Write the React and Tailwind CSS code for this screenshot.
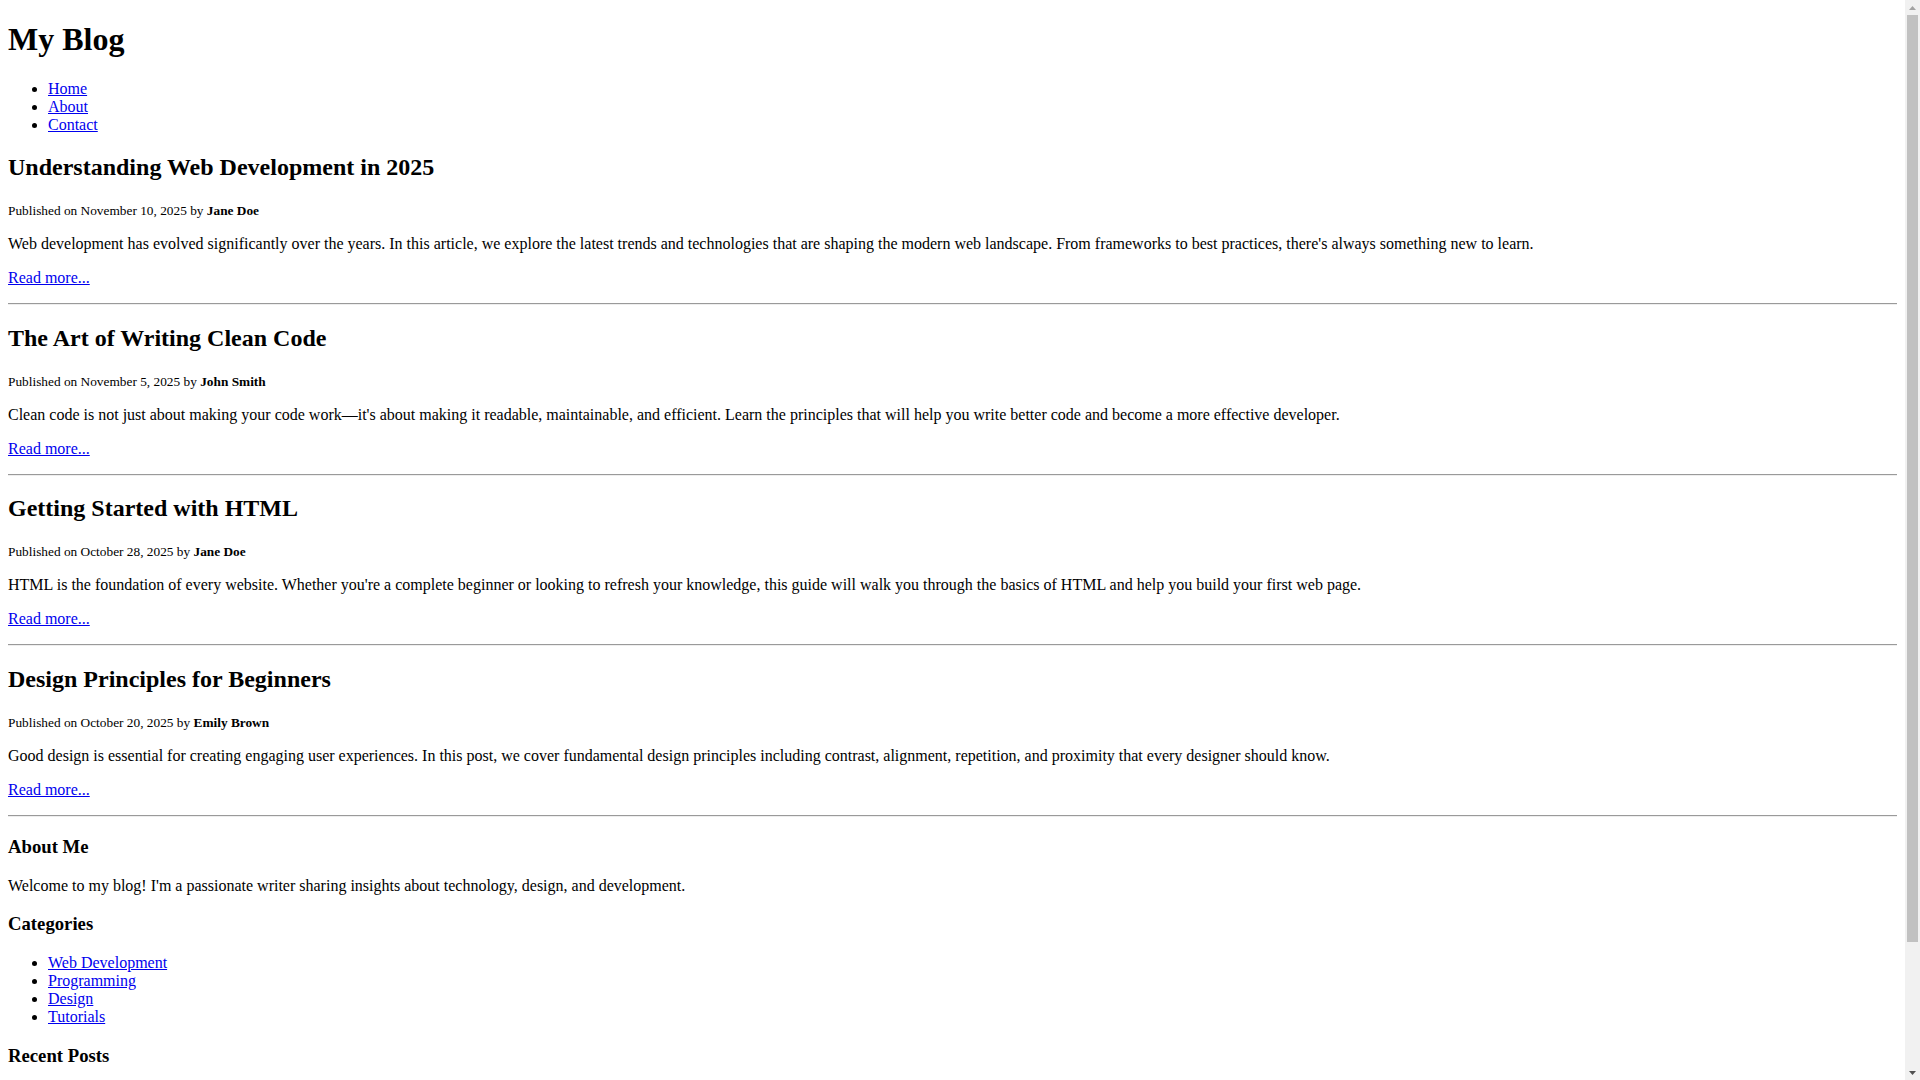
import React from "react";

const posts = [
  {
    title: "Understanding Web Development in 2025",
    date: "November 10, 2025",
    author: "Jane Doe",
    text: "Web development has evolved significantly over the years. In this article, we explore the latest trends and technologies that are shaping the modern web landscape. From frameworks to best practices, there's always something new to learn.",
  },
  {
    title: "The Art of Writing Clean Code",
    date: "November 5, 2025",
    author: "John Smith",
    text: "Clean code is not just about making your code work\u2014it's about making it readable, maintainable, and efficient. Learn the principles that will help you write better code and become a more effective developer.",
  },
  {
    title: "Getting Started with HTML",
    date: "October 28, 2025",
    author: "Jane Doe",
    text: "HTML is the foundation of every website. Whether you're a complete beginner or looking to refresh your knowledge, this guide will walk you through the basics of HTML and help you build your first web page.",
  },
  {
    title: "Design Principles for Beginners",
    date: "October 20, 2025",
    author: "Emily Brown",
    text: "Good design is essential for creating engaging user experiences. In this post, we cover fundamental design principles including contrast, alignment, repetition, and proximity that every designer should know.",
  },
];

const link = "text-[#0000ee] underline";
const li = "list-disc";

function Scrollbar() {
  return (
    <div className="w-[15px] h-[1080px] shrink-0 bg-[#f1f1f1] flex flex-col items-center">
      <div className="h-[15px] w-full flex items-center justify-center">
        <svg width="7" height="4" viewBox="0 0 7 4">
          <polygon points="3.5,0 7,4 0,4" fill="#a3a3a3" />
        </svg>
      </div>
      <div className="w-[11px] h-[927px] bg-[#c1c1c1]" />
      <div className="flex-1" />
      <div className="h-[15px] w-full flex items-center justify-center">
        <svg width="7" height="4" viewBox="0 0 7 4">
          <polygon points="0,0 7,0 3.5,4" fill="#505050" />
        </svg>
      </div>
    </div>
  );
}

export default function App() {
  return (
    <div className="flex items-start bg-white">
      <div className="flex-1 min-w-0">
        <div className="m-2 font-['Liberation_Serif',serif] text-base leading-[normal] text-black">
          <header>
            <h1 className="text-[32px] font-bold my-[21.44px] leading-[normal]">My Blog</h1>
            <nav>
              <ul className="my-4 pl-10">
                <li className={li}><a href="#" className={link}>Home</a></li>
                <li className={li}><a href="#" className={link}>About</a></li>
                <li className={li}><a href="#" className={link}>Contact</a></li>
              </ul>
            </nav>
          </header>
          <main>
            {posts.map((p) => (
              <article key={p.title}>
                <h2 className="text-2xl font-bold my-[19.92px] leading-[normal]">{p.title}</h2>
                <p className="my-4">
                  <small className="text-[13.33px]">
                    Published on {p.date} by <strong className="font-bold">{p.author}</strong>
                  </small>
                </p>
                <p className="my-4">{p.text}</p>
                <p className="my-4"><a href="#" className={link}>Read more...</a></p>
                <hr className="my-2 border-t border-b border-t-[#9a9a9a] border-b-[#eeeeee] h-0" />
              </article>
            ))}
          </main>
          <aside>
            <h3 className="text-[18.72px] font-bold my-[18.72px] leading-[normal]">About Me</h3>
            <p className="my-4">Welcome to my blog! I'm a passionate writer sharing insights about technology, design, and development.</p>
            <h3 className="text-[18.72px] font-bold my-[18.72px] leading-[normal]">Categories</h3>
            <ul className="my-4 pl-10">
              <li className={li}><a href="#" className={link}>Web Development</a></li>
              <li className={li}><a href="#" className={link}>Programming</a></li>
              <li className={li}><a href="#" className={link}>Design</a></li>
              <li className={li}><a href="#" className={link}>Tutorials</a></li>
            </ul>
            <h3 className="text-[18.72px] font-bold my-[18.72px] leading-[normal]">Recent Posts</h3>
            <ul className="my-4 pl-10">
              {posts.map((p) => (
                <li key={p.title} className={li}><a href="#" className={link}>{p.title}</a></li>
              ))}
            </ul>
          </aside>
          <footer>
            <p className="my-4">&copy; 2025 My Blog. All rights reserved.</p>
          </footer>
        </div>
      </div>
      <Scrollbar />
    </div>
  );
}
